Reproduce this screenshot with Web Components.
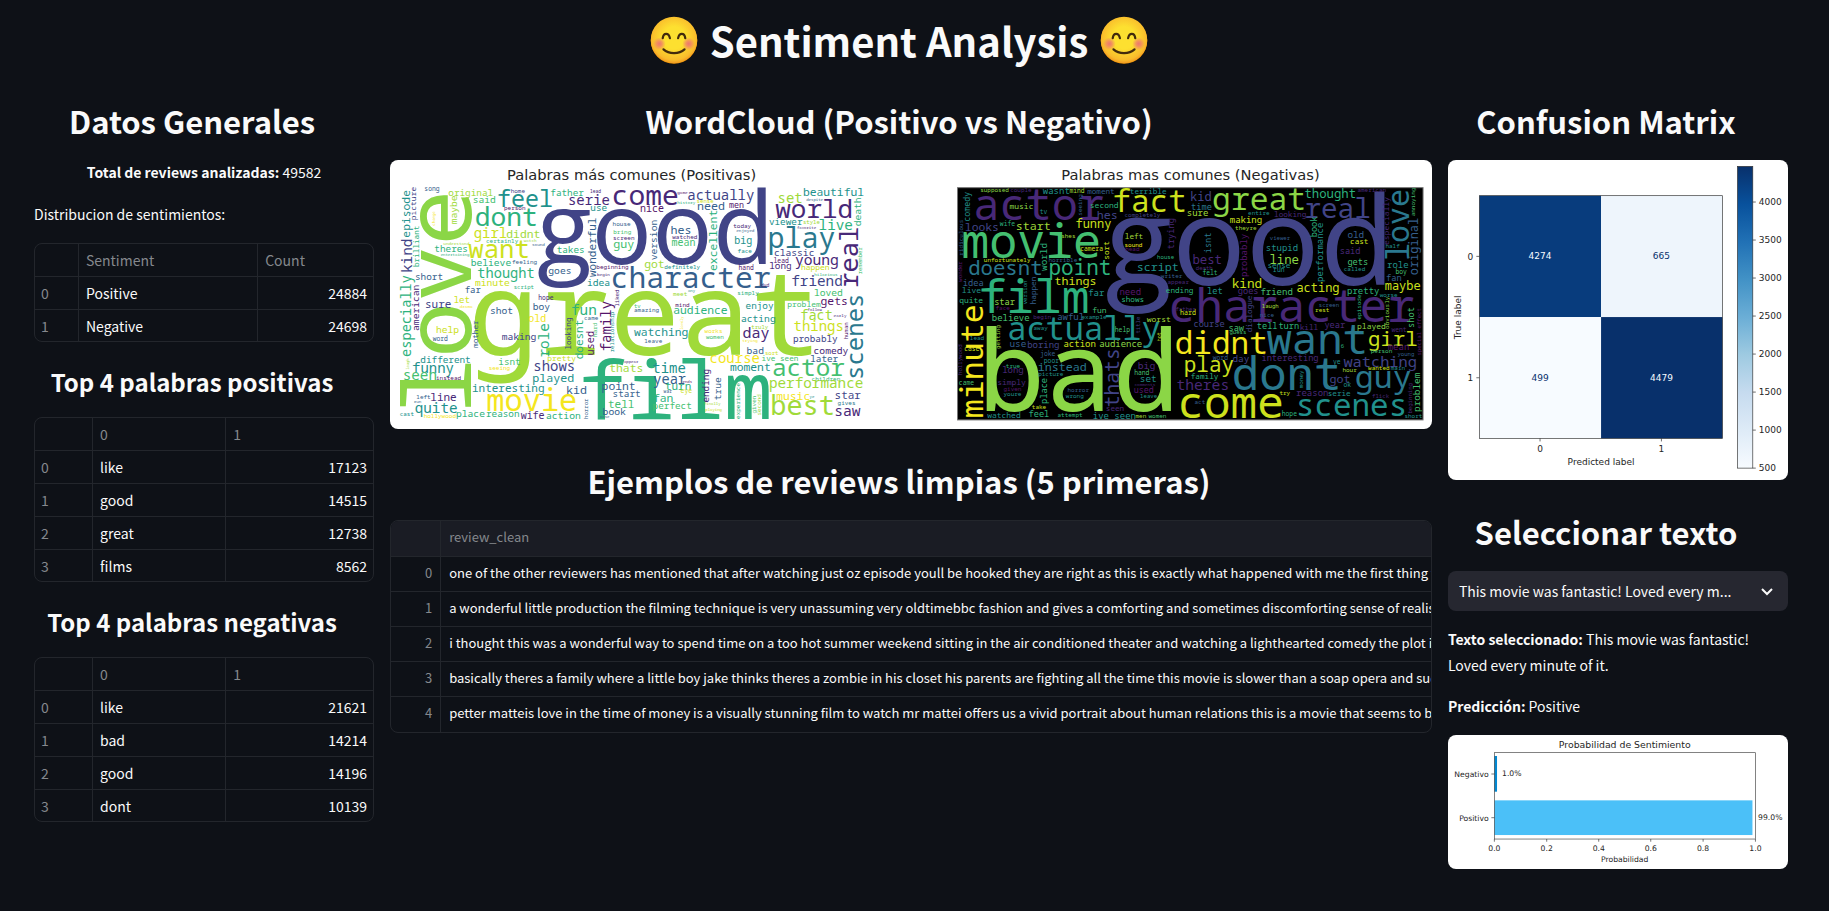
<!DOCTYPE html>
<html lang="es">
<head>
<meta charset="utf-8">
<meta name="viewport" content="width=device-width, initial-scale=1">
<title>Sentiment Analysis</title>
<style>
  html { background: #0e1117; }
  body {
    margin: 0;
    color: #fafafa;
    background: #0e1117;
    font-family: "Noto Sans CJK KR", "Noto Sans", sans-serif;
    font-size: 14px;
    line-height: 26px;
  }
</style>
</head>
<body>
<sentiment-dashboard></sentiment-dashboard>

<template id="dashboard-template">
  <style>
    :host { display: block; padding: 0 41px 32px 34px; }
    .columns { display: flex; gap: 16px; align-items: flex-start; }
    .column {
      flex: 1 1 calc(20% - 16px);
      min-width: 0;
      display: flex;
      flex-direction: column;
    }
    .column.wide { flex-basis: calc(60% - 16px); }
    p { margin: -1px 0 16px; }
    p.centered { margin-bottom: 17px; text-align: center; }
    strong { font-weight: 700; }
    data-grid, figure-card, text-picker { margin-bottom: 16px; }
  </style>
  <dash-title>Sentiment Analysis</dash-title>
  <main class="columns">
    <section class="column">
      <dash-heading>Datos Generales</dash-heading>
      <p class="centered"><strong>Total de reviews analizadas:</strong> 49582</p>
      <p>Distribucion de sentimientos:</p>
      <data-grid widths="45 179 115" columns='["Sentiment","Count"]'
        rows='[["Positive",24884],["Negative",24698]]'></data-grid>
      <dash-heading level="3">Top 4 palabras positivas</dash-heading>
      <data-grid widths="59 133 147" columns='["0","1"]'
        rows='[["like",17123],["good",14515],["great",12738],["films",8562]]'></data-grid>
      <dash-heading level="3">Top 4 palabras negativas</dash-heading>
      <data-grid widths="59 133 147" columns='["0","1"]'
        rows='[["like",21621],["bad",14214],["good",14196],["dont",10139]]'></data-grid>
    </section>
    <section class="column wide">
      <dash-heading>WordCloud (Positivo vs Negativo)</dash-heading>
      <figure-card><word-clouds></word-clouds></figure-card>
      <dash-heading>Ejemplos de reviews limpias (5 primeras)</dash-heading>
      <review-grid></review-grid>
    </section>
    <section class="column">
      <dash-heading>Confusion Matrix</dash-heading>
      <figure-card><confusion-matrix></confusion-matrix></figure-card>
      <dash-heading>Seleccionar texto</dash-heading>
      <text-picker></text-picker>
      <p><strong>Texto seleccionado:</strong> This movie was fantastic! Loved every minute of it.</p>
      <p><strong>Predicción:</strong> Positive</p>
      <figure-card><probability-chart></probability-chart></figure-card>
    </section>
  </main>
</template>

<template id="title-template">
  <style>
    :host { display: block; }
    h1 {
      display: flex;
      justify-content: center;
      align-items: center;
      gap: 12px;
      margin: 0;
      padding: 14px 24px 19px 0;
      font-size: 40px;
      line-height: 52px;
      font-weight: 700;
    }
  </style>
  <h1><smile-icon></smile-icon><slot></slot><smile-icon></smile-icon></h1>
</template>

<template id="smile-template">
  <style>
    :host { display: block; width: 48px; height: 48px; }
    svg { display: block; width: 100%; height: 100%; }
  </style>
  <svg viewBox="0 0 128 128" aria-hidden="true">
    <defs>
      <radialGradient id="face" cx="64" cy="58" r="66" gradientUnits="userSpaceOnUse">
        <stop offset=".45" stop-color="#fde030"/>
        <stop offset=".9" stop-color="#f9bc2c"/>
        <stop offset="1" stop-color="#f4a223"/>
      </radialGradient>
      <radialGradient id="cheek">
        <stop offset="0" stop-color="#ed7770"/>
        <stop offset=".4" stop-color="#ed7770" stop-opacity=".7"/>
        <stop offset="1" stop-color="#ed7770" stop-opacity="0"/>
      </radialGradient>
    </defs>
    <ellipse cx="64" cy="66" rx="62" ry="61" fill="#eb8f00"/>
    <circle cx="64" cy="64" r="62" fill="url(#face)"/>
    <circle cx="25" cy="74" r="17" fill="url(#cheek)"/>
    <circle cx="103" cy="74" r="17" fill="url(#cheek)"/>
    <path d="M34 59c2-15 16-15 19 0M75 59c3-15 17-15 19 0" fill="none" stroke="#422b0d" stroke-width="6" stroke-linecap="round"/>
    <path d="M36 89c14 13 42 13 56 0" fill="none" stroke="#422b0d" stroke-width="6" stroke-linecap="round"/>
  </svg>
</template>

<template id="figure-template">
  <style>
    :host { display: block; border-radius: 8px; overflow: hidden; background: #fff; }
  </style>
  <slot></slot>
</template>

<template id="picker-template">
  <style>
    :host { display: grid; align-items: center; }
    select, svg { grid-area: 1 / 1; }
    select {
      appearance: none;
      width: 100%;
      height: 40px;
      margin: 0;
      padding: 0 40px 0 11px;
      border: 0;
      border-radius: 8px;
      background: #262730;
      color: #fafafa;
      font: inherit;
      line-height: 26px;
    }
    svg { justify-self: end; margin-right: 11px; width: 20px; height: 20px; pointer-events: none; }
  </style>
  <select aria-label="Seleccionar texto">
    <option value="This movie was fantastic! Loved every minute of it.">This movie was fantastic! Loved every m...</option>
  </select>
  <svg viewBox="0 0 20 20" aria-hidden="true"><path d="M5 8l5 5 5-5" fill="none" stroke="#fafafa" stroke-width="2"/></svg>
</template>

<template id="matrix-template">
  <style>
    :host { display: block; }
    svg { display: block; width: 100%; }
    text { font-family: "DejaVu Sans", sans-serif; font-size: 27px; fill: #262626; }
    .tick { stroke: #262626; stroke-width: 2; }
    .m { text-anchor: middle; }
    .e { text-anchor: end; }
  </style>
  <svg viewBox="53 209 1020 960" role="img" aria-label="Confusion Matrix">
    <defs>
      <linearGradient id="blues" x1="0" y1="1" x2="0" y2="0">
        <stop offset="0" stop-color="#f7fbff"/><stop offset=".125" stop-color="#deebf7"/>
        <stop offset=".25" stop-color="#c6dbef"/><stop offset=".375" stop-color="#9ecae1"/>
        <stop offset=".5" stop-color="#6baed6"/><stop offset=".625" stop-color="#4292c6"/>
        <stop offset=".75" stop-color="#2171b5"/><stop offset=".875" stop-color="#08519c"/>
        <stop offset="1" stop-color="#08306b"/>
      </linearGradient>
    </defs>
    <rect x="147" y="316" width="365" height="364" fill="#083c7d"/>
    <rect x="512" y="316" width="364" height="364" fill="#eef5fc"/>
    <rect x="147" y="680" width="365" height="364" fill="#f7fbff"/>
    <rect x="512" y="680" width="364" height="364" fill="#08306b"/>
    <rect x="147" y="316" width="729" height="728" fill="none" stroke="#333" stroke-width="2"/>
    <rect x="921" y="228" width="46" height="905" fill="url(#blues)" stroke="#333" stroke-width="2"/>
    <g id="ticks"></g>
    <text class="m" x="329" y="506" style="fill:#f7fbff">4274</text>
    <text class="m" x="693" y="506" style="fill:#08306b">665</text>
    <text class="m" x="329" y="871" style="fill:#08306b">499</text>
    <text class="m" x="693" y="871" style="fill:#f7fbff">4479</text>
    <text class="e" x="129" y="509">0</text>
    <text class="e" x="129" y="873">1</text>
    <text class="m" x="329" y="1085">0</text>
    <text class="m" x="693" y="1085">1</text>
    <text class="m" x="512" y="1124">Predicted label</text>
    <text class="m" transform="translate(93 681) rotate(-90)">True label</text>
    <path class="tick" d="M138 498h9M138 862h9M329 1044v9M693 1044v9"/>
  </svg>
</template>

<template id="probability-template">
  <style>
    :host { display: block; }
    svg { display: block; width: 100%; }
    text { font-family: "DejaVu Sans", sans-serif; font-size: 23px; fill: #262626; }
    .title { font-size: 28px; }
    .m { text-anchor: middle; }
    .e { text-anchor: end; }
  </style>
  <svg viewBox="53 707 1020 402" role="img" aria-label="Probabilidad de Sentimiento">
    <rect x="192" y="770" width="8" height="107" fill="#0288d1"/>
    <rect x="192" y="903" width="774" height="104" fill="#4bc0f8"/>
    <rect x="192" y="760" width="783" height="259" fill="none" stroke="#444" stroke-width="2"/>
    <path d="M183 824h9M183 955h9M192 1019v8M349 1019v8M505 1019v8M661 1019v8M818 1019v8M975 1019v8" stroke="#333" stroke-width="2"/>
    <text class="m title" x="583" y="746">Probabilidad de Sentimiento</text>
    <text class="e" x="175" y="833">Negativo</text>
    <text class="e" x="175" y="964">Positivo</text>
    <text x="215" y="831">1.0%</text>
    <text x="983" y="962">99.0%</text>
    <text class="m" x="192" y="1054">0.0</text>
    <text class="m" x="349" y="1054">0.2</text>
    <text class="m" x="505" y="1054">0.4</text>
    <text class="m" x="661" y="1054">0.6</text>
    <text class="m" x="818" y="1054">0.8</text>
    <text class="m" x="975" y="1054">1.0</text>
    <text class="m" x="583" y="1088">Probabilidad</text>
  </svg>
</template>

<template id="review-template">
  <style>
    :host { display: block; border: 1px solid #23262c; border-radius: 8px; overflow: hidden; font-size: 13px; line-height: 32px; }
    table { width: 100%; border-collapse: separate; border-spacing: 0; table-layout: fixed; }
    th, td { height: 35px; padding: 0 8px 2px; box-sizing: border-box; text-align: left; font-weight: 400; white-space: nowrap; overflow: hidden; border-bottom: 1px solid #23262c; }
    td { padding-right: 0; }
    thead th { background: #1a1c24; color: #85888d; height: 36px; }
    tr > :first-child { width: 50px; border-right: 1px solid #23262c; }
    tbody th { text-align: right; color: #85888d; }
    tbody tr:last-child > * { border-bottom: 0; }
  </style>
  <table>
    <thead><tr><th></th><th scope="col">review_clean</th></tr></thead>
    <tbody></tbody>
  </table>
</template>

<script>
const SVG_NS = 'http://www.w3.org/2000/svg';

class TemplateElement extends HTMLElement {
  constructor() {
    super();
    const template = document.getElementById(this.constructor.template);
    this.attachShadow({ mode: 'open' }).append(template.content.cloneNode(true));
  }
}

customElements.define('smile-icon', class extends TemplateElement { static template = 'smile-template'; });
customElements.define('dash-title', class extends TemplateElement { static template = 'title-template'; });
customElements.define('figure-card', class extends TemplateElement { static template = 'figure-template'; });
customElements.define('text-picker', class extends TemplateElement { static template = 'picker-template'; });
customElements.define('probability-chart', class extends TemplateElement { static template = 'probability-template'; });

customElements.define('dash-heading', class extends HTMLElement {
  connectedCallback() {
    if (this.shadowRoot) return;
    const tag = 'h' + (this.getAttribute('level') || 2);
    this.attachShadow({ mode: 'open' }).innerHTML = `
      <style>
        :host { display: block; }
        h2, h3 { margin: 0; text-align: center; font-weight: 600; white-space: nowrap; }
        h2 { font-size: 31px; line-height: 44px; padding: 14px 24px 17px 0; }
        h3 { font-size: 24px; line-height: 34px; padding: 7px 24px 18px 0; }
      </style>
      <${tag}><slot></slot></${tag}>`;
  }
});

customElements.define('data-grid', class extends HTMLElement {
  connectedCallback() {
    if (this.shadowRoot) return;
    const columns = JSON.parse(this.getAttribute('columns'));
    const rows = JSON.parse(this.getAttribute('rows'));
    const widths = this.getAttribute('widths').split(' ').map(Number);
    const total = widths.reduce((a, b) => a + b);
    this.attachShadow({ mode: 'open' }).innerHTML = `
      <style>
        :host { display: block; border: 1px solid #23262c; border-radius: 8px; overflow: hidden; }
        table { width: 100%; border-collapse: separate; border-spacing: 0; table-layout: fixed; line-height: 24px; }
        th, td { padding: 4px 6px; font-weight: 400; text-align: left; border-right: 1px solid #23262c; border-bottom: 1px solid #23262c; }
        th + th, td { padding-left: 7px; }
        th { color: #85888d; }
        tr > :last-child { border-right: 0; }
        tbody tr:last-child > * { border-bottom: 0; padding-bottom: 3px; }
        td.number { text-align: right; }
      </style>
      <table>
        <colgroup>${widths.map(w => `<col style="width:${Math.round(w / total * 100)}%">`).join('')}</colgroup>
        <thead><tr><th></th>${columns.map(c => `<th scope="col">${c}</th>`).join('')}</tr></thead>
        <tbody>${rows.map((row, i) => `<tr><th scope="row">${i}</th>${row.map(v =>
          `<td class="${typeof v === 'number' ? 'number' : 'label'}">${v}</td>`).join('')}</tr>`).join('')}</tbody>
      </table>`;
  }
});

customElements.define('review-grid', class extends TemplateElement {
  static template = 'review-template';
  connectedCallback() {
    const reviews = [
      'one of the other reviewers has mentioned that after watching just oz episode youll be hooked they are right as this is exactly what happened with me the first thing that struck',
      'a wonderful little production the filming technique is very unassuming very oldtimebbc fashion and gives a comforting and sometimes discomforting sense of realism to the',
      'i thought this was a wonderful way to spend time on a too hot summer weekend sitting in the air conditioned theater and watching a lighthearted comedy the plot is simplistic',
      'basically theres a family where a little boy jake thinks theres a zombie in his closet his parents are fighting all the time this movie is slower than a soap opera and suddenly',
      'petter matteis love in the time of money is a visually stunning film to watch mr mattei offers us a vivid portrait about human relations this is a movie that seems to be telling',
    ];
    this.shadowRoot.querySelector('tbody').innerHTML =
      reviews.map((text, i) => `<tr><th scope="row">${i}</th><td>${text}</td></tr>`).join('');
  }
});

customElements.define('confusion-matrix', class extends TemplateElement {
  static template = 'matrix-template';
  connectedCallback() {
    let marks = '';
    for (let value = 500, y = 1133; value <= 4000; value += 500, y -= 114) {
      marks += `<path class="tick" d="M967 ${y}h9"/><text x="985" y="${y + 10}">${value}</text>`;
    }
    this.shadowRoot.getElementById('ticks').innerHTML = marks;
  }
});

/* Viridis samples, from dark to bright. */
const VIRIDIS = {
  p: '#55156b', v: '#482878', i: '#414487', b: '#355f8d', t: '#2a788e', c: '#21918c',
  g: '#2db27d', e: '#44bf70', l: '#8bd646', m: '#a0da39', n: '#cde11d', y: '#f4e61e',
};

/* word, left, baseline, width, colour; "^" marks words that read upwards
   (baseline x, lower end, length), "~" words in the display face.
   Spaces inside a phrase are written "_". */
const POSITIVE = `
good 455 326 682 i ~;great 270 598 1014 m;film 594 790 552 g;love 257 760 638 l ^;character 681 398 467 b;
song 118 107 42 b;original 191 121 131 m;feel 339 155 160 c;home 377 113 40 i;father 497 122 97 g;said 264 143 65 e;
person 357 164 63 p;lead 615 114 32 v;serie 551 150 121 v;use 617 168 47 c;dont 273 213 180 g;girl 268 249 95 n;
didnt 365 249 97 m;certainly 303 262 93 g;watch 416 259 37 m;understand 175 269 74 m;theres 149 290 96 g;
entertaining 167 301 88 g;want 254 309 175 n;sound 441 272 38 b;takes 516 294 80 g;believe 258 332 118 g;
feeling 381 326 72 b;thought 278 369 168 g;short 91 375 79 b;minute 271 392 99 n;far 240 414 45 b;script 386 400 60 g;
goes 491 355 66 b;sure 121 457 75 i;let 207 443 45 n;drama 224 458 38 y;hope 460 435 42 v;boy 444 464 49 b;
shot 316 477 65 b;old 431 499 50 y;fun 560 480 72 g;came 597 493 40 b;making 351 554 102 i;help 154 532 66 n;
word 143 558 43 b;idea 607 391 65 c;beginning 634 342 94 p;begin 636 361 38 v;different 107 622 148 c;
funny 83 652 121 c;isnt 341 628 63 e;seeing 311 643 61 y;pretty 487 616 82 n;shows 447 647 121 i;seen 55 675 98 e;
instead 153 674 73 p;played 443 680 120 c;interesting 262 710 216 c;movie 308 768 260 y;kid 544 716 58 b;
left 94 731 40 b;line 137 738 76 v;run 86 744 22 b;quite 91 774 124 c;cast 44 782 41 c;hollywood 116 788 95 y;
place 214 786 83 g;reason 304 786 98 g;wife 408 790 68 v;action 484 790 99 g;come 684 148 191 v;bring 685 236 52 e;
house 683 211 53 b;screen 684 254 62 v;guy 686 277 58 e;book 654 779 66 b;point 651 704 97 b;start 684 725 80 b;
thats 674 649 97 m;tell 670 758 76 e;appear 717 622 42 v;tv 747 458 18 e;amazing 747 471 72 b;watching 748 543 159 c;
nice 766 169 67 p;case 645 787 28 b;episode 73 245 137 c ^;picture 93 194 96 i ^;maybe 214 205 82 m ^;
change 150 210 42 y ^;brilliant 102 334 120 g ^;kind 79 350 98 i ^;especially 77 603 242 g ^;american 101 525 134 v ^;
laugh 72 642 32 m ^;mother 279 577 80 b ^;role 491 604 97 g ^;looking 556 582 93 i ^;doesnt 594 610 116 g ^;
used 625 599 70 p ^;hard 636 544 40 e ^;family 676 585 147 p ^;relationship 685 590 120 c ^;liked 700 453 48 v ^;
wonderful 632 363 176 b ^;horror 607 790 58 b ^;version 815 313 118 b ^;excellent 994 345 177 g ^;
game 877 115 29 p;actually 909 134 198 i;history 877 147 53 g;sense 935 144 50 n;men 1033 157 42 p;need 937 164 79 b;
beautiful 1255 122 177 c;set 1180 143 70 m;despite 1264 138 50 b;world 1175 187 223 v;viewer 1153 209 98 c;
style 1254 207 50 m;favorite 1236 220 58 v;live 1303 224 97 g;play 1152 277 192 t;classic 1168 301 116 i;
lead 1166 324 43 p;long 1154 342 64 v;young 1232 329 125 v;happen 1248 345 82 n;hilarious 1288 362 68 g;
friend 1221 391 148 i;loved 1288 421 82 e;gets 1308 448 78 p;follow 1268 467 42 v;fact 1247 495 92 m;
early 1346 484 36 v;problem 1207 456 97 e;things 1228 528 146 n;probably 1225 560 133 i;comedy 1287 596 100 v;
later 1277 619 79 b;actor 1164 662 210 e;children 1280 676 82 g;ive_seen 1130 617 106 e;performance 1154 699 275 m;
music 1175 733 98 y;ye 1274 728 13 c;star 1350 732 76 i;gives 1358 750 51 t;saw 1350 781 74 v;best 1160 780 184 m;
hes 858 237 58 b;watched 862 252 74 v;mean 861 271 68 e;today 1045 217 52 v;enjoyed 1054 231 52 b;big 1049 265 50 c;
face 1058 292 41 c;got 779 337 57 m;definitely 838 342 103 c;hand 1061 344 43 p;dvd 1128 394 23 v;any 909 409 20 c;
meet 864 423 41 m;mind 871 454 41 p;simply 1057 419 61 g;enjoy 1083 460 81 c;audience 866 475 158 g;
acting 1069 500 99 c;works 959 532 52 y;truly 1099 520 50 m;day 1075 549 75 v;women 963 551 52 e;leave 778 562 52 b;
trying 1072 561 44 y;bad 1086 595 49 b;sort 1140 598 39 n;course 976 622 147 y;moment 1036 647 117 c;
time 804 652 95 c;year 806 685 93 b;ends 893 682 28 p;turn 841 703 75 g;war 836 714 24 b;eye 887 714 31 n;
fan 805 739 56 g;perfect 804 762 115 e;finally 957 750 50 m;playing 961 767 50 n;death 1427 211 83 g ^;
real 1417 392 173 v ^;remember 1431 356 80 e ^;scenes 1432 670 250 t ^;human 1387 551 50 p ^;lovely 893 522 38 y ^;
ending 971 740 98 v ^;true 1007 733 65 b ^;experience 1063 790 104 g ^;given 1111 774 52 e ^;second 1127 780 62 m ^`;

const NEGATIVE = `
good 2160 390 835 i ~;bad 1798 768 562 l;character 2357 499 721 v;supposed 1786 111 83 l;couple 1876 110 64 v;
wasnt 1975 115 77 c;mind 2054 114 44 m;moment 2107 117 81 b;terrible 2235 116 108 c;actor 1772 193 377 v;
fact 2188 170 210 n;music 1874 161 68 l;tv 1965 175 20 c;second 2115 158 82 g;hes 2137 192 58 i;
completely 2219 186 106 i;looks 1741 227 99 i;wife 1845 212 43 g;start 1894 224 100 m;funny 2073 219 102 n;
movie 1736 307 402 e;shes 2029 249 40 m;camera 2086 287 67 n;left 2220 250 53 m;sound 2219 275 53 y;head 2221 287 40 p;
house 2317 311 50 g;horrible 1991 319 84 b;unfortunately 1797 321 137 n;doesnt 1753 360 214 t;point 1994 360 182 g;
script 2257 347 120 c;writer 2328 368 64 b;appear 2348 385 62 v;things 2010 388 122 n;idea 1735 391 60 b;
live 1731 412 54 c;far 2111 423 45 c;film 1788 472 316 g;quite 1723 443 68 g;star 1829 450 60 l;fun 2122 474 40 e;
need 2205 418 62 p;shows 2209 440 66 g;ending 2343 412 80 g;face 1832 463 40 p;begin 1945 490 52 v;awful 2018 495 78 b;
example 2090 490 72 c;believe 1822 496 110 e;worst 2286 499 68 m;actually 1872 553 450 c;away 1946 525 40 c;
help 2190 531 42 e;use 1875 574 46 b;boring 1928 578 94 i;action 2037 575 95 n;audience 2144 575 124 l;lead 1755 553 40 c;
case 1738 588 42 n;joke 1966 602 42 b;poor 1977 622 42 c;instead 1960 647 143 t;picture 1960 661 74 c;true 1863 637 40 g;
long 1853 653 62 v;simply 1837 689 82 v;given 1856 707 53 p;youre 1856 721 52 c;horror 2048 710 62 b;wrong 2043 727 52 c;
big 2260 640 48 v;hand 2248 659 42 e;set 2266 681 46 c;comments 2249 691 62 v;used 2248 714 56 p;leave 2266 728 50 c;
came 1722 690 42 e;take 1941 762 41 n;feel 1932 786 60 g;seen 2163 767 52 v;watched 1807 789 98 c;attempt 2018 785 72 g;
ive_seen 2125 790 124 c;men 2252 787 30 m;women 2291 788 52 e;comedy 1755 197 88 c ^;ridiculous 1732 300 104 b ^;
wonder 1730 378 60 p ^;minute 1793 783 330 y ^;seeing 2091 180 62 b ^;sort 2173 312 52 n ^;world 1987 345 80 g ^;
version 1924 446 70 c ^;happen 1952 446 80 b ^;trying 2368 280 90 v ^;getting 1845 580 70 m ^;hollywood 1731 658 92 v ^;
place 1985 744 76 g ^;thats 2201 752 170 i ^;title 2264 534 48 i ^;hot 2327 557 25 n ^;kid 2417 136 60 i;time 2420 163 58 t;
great 2487 164 270 l;thought 2760 127 149 g;american 2918 109 82 v;sure 2407 183 61 m;entire 2590 179 62 c;
looking 2668 184 92 v;real 2763 187 188 i;making 2536 202 93 n;theyre 2551 224 62 m;viewer 2655 253 60 b;
stupid 2644 286 94 c;line 2655 325 85 l;sense 2648 337 66 c;run 2665 351 32 c;old 2889 249 46 b;cast 2896 266 52 n;
said 2866 297 60 v;gets 2889 330 60 e;called 2877 347 62 c;half 3002 279 40 c;role 3008 339 62 c;boy 3032 356 32 e;
fan 3005 378 44 b;best 2424 326 84 v;death 2433 345 50 v;felt 2453 360 42 g;kind 2542 397 86 n;goes 2560 415 60 v;
friend 2628 419 93 e;acting 2736 411 124 n;pretty 2888 417 94 g;worse 2985 424 52 c;maybe 3001 405 104 n;let 2468 416 44 c;
father 2372 468 60 v;hard 2386 480 46 n;laugh 2631 459 50 m;nice 2625 485 40 b;screen 2802 455 60 b;rest 2791 471 40 n;
course 2427 515 90 i;saw 2532 526 44 e;guess 2534 535 50 e;tell 2617 521 60 g;turn 2682 521 60 g;kill 2745 524 52 v;
year 2820 517 60 v;played 2917 521 82 l;went 3020 529 42 v;didnt 2375 597 266 y;want 2652 597 288 t;girl 2953 571 140 n;
6 2868 577 8 g;mean 3010 583 62 p;person 2958 592 62 e;young 3038 602 50 b;play 2400 650 142 n;word 2484 613 42 b;
day 2544 620 46 i;interesting 2631 618 170 v;ye 2845 625 20 c;watching 2878 634 217 i;dont 2548 703 310 t;
wanted 2950 645 62 n;main 3018 645 40 c;hour 2873 650 40 m;family 2418 670 80 g;theres 2377 703 154 v;got 2835 684 58 i;
guy 2915 698 158 t;ok 2876 695 20 c;reason 2735 723 94 v;serie 2829 723 66 c;flick 2962 727 50 v;try 2684 720 30 n;
come 2385 788 303 n;act 2429 746 30 b;scenes 2738 782 322 c;hope 2691 782 42 g;short 3059 789 52 c;isnt 2479 292 58 t ^;
probably 2586 363 125 p ^;book 2797 244 60 g ^;performance 2813 378 172 c ^;especially 3012 268 138 v ^;love 3072 312 204 t ^;
original 3100 358 168 b ^;annoying 3090 182 84 e ^;dialogue 2600 530 108 i ^;episode 2927 492 72 g ^;
obviously 3013 520 94 l ^;shot 3088 516 58 e ^;special_effect 3108 600 142 p ^;beginning 3080 774 92 v ^;
problem 3104 768 112 e ^;money 2755 698 52 c ^`;

customElements.define('word-clouds', class extends HTMLElement {
  connectedCallback() {
    if (this.shadowRoot) return;
    this.attachShadow({ mode: 'open' }).innerHTML = `
      <style>
        :host { display: block; }
        svg { display: block; width: 100%; }
        text { font-family: "Noto Sans Mono", "DejaVu Sans Mono", monospace; }
        .display { font-family: "Open Sans", sans-serif; }
        .title { font-family: "DejaVu Sans", sans-serif; font-size: 44px; fill: #262626; text-anchor: middle; }
      </style>
      <svg viewBox="14 14 3126 807" role="img" aria-label="Palabras más comunes">
        <text class="title" x="739" y="75">Palabras más comunes (Positivas)</text>
        <text class="title" x="2416" y="75">Palabras mas comunes (Negativas)</text>
        <g id="positive"></g>
        <rect x="1717" y="97" width="1397" height="697" fill="#000" stroke="#777" stroke-width="3"/>
        <g id="negative"></g>
      </svg>`;
    this.draw('positive', POSITIVE);
    this.draw('negative', NEGATIVE);
  }
  draw(id, list) {
    const group = this.shadowRoot.getElementById(id);
    for (const entry of list.split(';')) {
      const [word, x, y, span, colour, style] = entry.trim().split(' ');
      const display = style === '~';
      /* A monospaced letter is .6em wide, less the side bearings of the word. */
      const ems = display ? 2.26 : word.length * 0.6 - 0.13;
      const size = Math.round(span / ems);
      const bearing = display ? 0 : Math.round(size * 0.06);
      const text = document.createElementNS(SVG_NS, 'text');
      text.textContent = word.replace('_', ' ');
      text.setAttribute('font-size', size);
      text.setAttribute('fill', VIRIDIS[colour]);
      if (display) text.setAttribute('class', 'display');
      if (style === '^') {
        text.setAttribute('transform', `translate(${x} ${+y + bearing}) rotate(-90)`);
      } else {
        text.setAttribute('x', x - bearing);
        text.setAttribute('y', y);
      }
      group.append(text);
    }
  }
});

customElements.define('sentiment-dashboard', class extends TemplateElement { static template = 'dashboard-template'; });
</script>
</body>
</html>
